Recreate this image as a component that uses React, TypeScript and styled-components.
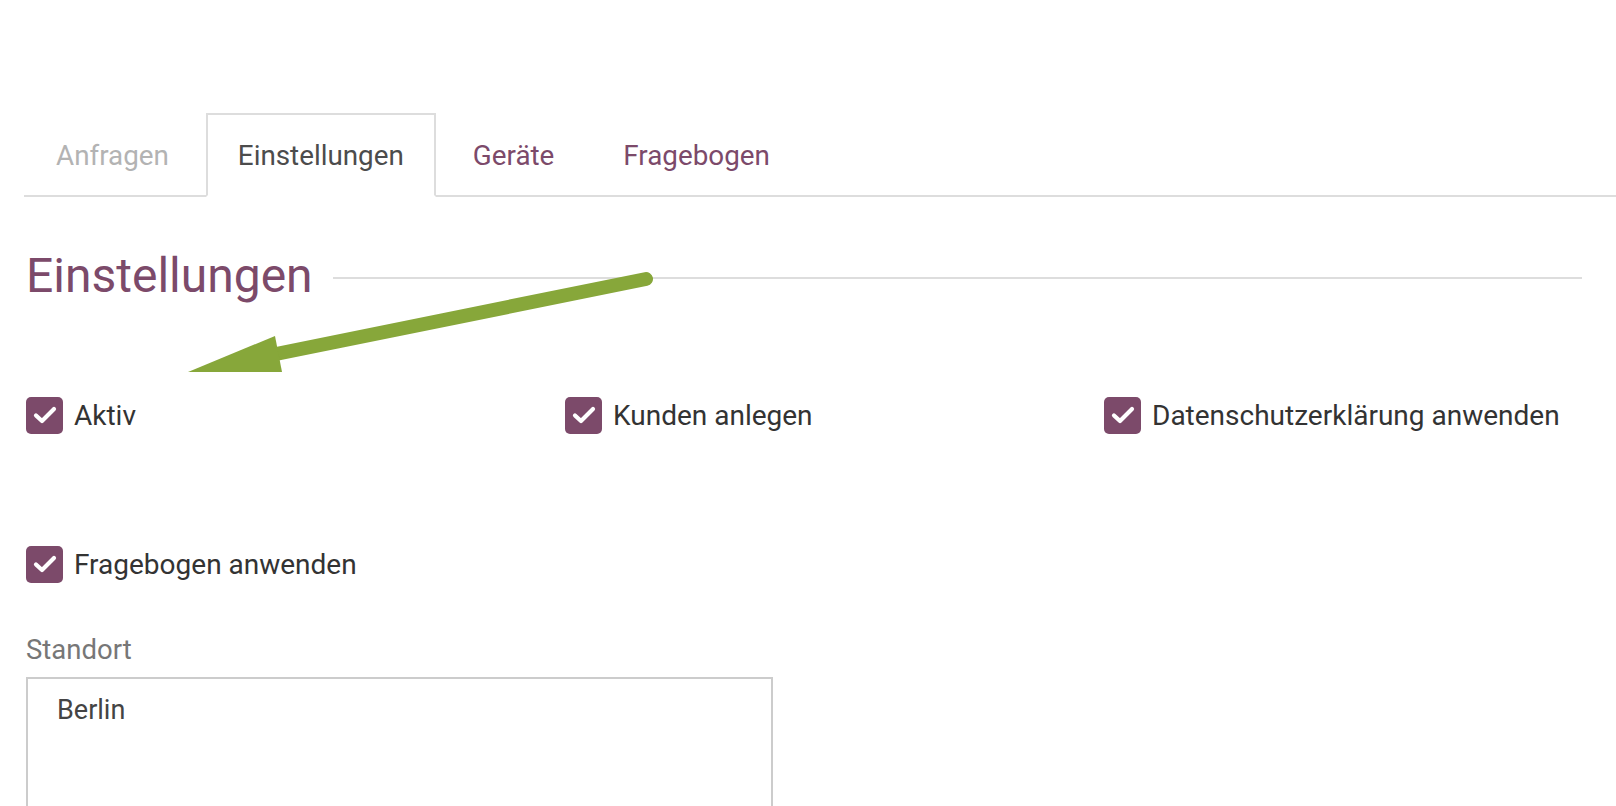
import React from 'react';
import styled, { createGlobalStyle } from 'styled-components';

const GlobalStyle = createGlobalStyle`
	html, body {
		margin: 0;
		padding: 0;
		background: #fff;
	}
	body {
		font-family: Roboto, 'Liberation Sans', sans-serif;
		color: #333;
	}
`;

const PageStyled = styled.div`
	position: relative;
	width: 1616px;
	height: 806px;
	overflow: hidden;
	padding-top: 113px;
	box-sizing: border-box;
`;

const TabBar = styled.div`
	display: flex;
	gap: 5px;
	margin-left: 24px;
	border-bottom: 2px solid #dddddd;
	height: 84px;
	box-sizing: border-box;
`;

const Tab = styled.div<{ $active?: boolean; $disabled?: boolean }>`
	display: flex;
	align-items: center;
	padding: 0 30px;
	margin-bottom: -2px;
	font-size: 27.8px;
	color: ${(props) => (props.$disabled ? '#b3b3b3' : props.$active ? '#4c4c4c' : '#7c4a6a')};
	border: 2px solid ${(props) => (props.$active ? '#dddddd' : 'transparent')};
	border-bottom: 2px solid ${(props) => (props.$active ? '#fff' : 'transparent')};
	background: ${(props) => (props.$active ? '#fff' : 'transparent')};
	cursor: pointer;
`;

const Content = styled.div`
	padding: 0 34px 0 26px;
`;

const SectionTitle = styled.div`
	display: flex;
	align-items: center;
	gap: 20px;
	margin-top: 50px;
	h2 {
		margin: 0;
		font-weight: 400;
		font-size: 48px;
		line-height: 58px;
		color: #7c4a6a;
		white-space: nowrap;
	}
	.line {
		flex: 1;
		height: 2px;
		background: #dddddd;
		margin-top: 4px;
	}
`;

const CheckGrid = styled.div`
	display: grid;
	grid-template-columns: repeat(3, 539px);
	row-gap: 113px;
	margin-top: 92px;
`;

const CheckItem = styled.label`
	display: flex;
	align-items: center;
	gap: 11px;
	height: 36px;
	font-size: 28px;
	color: #333;
	.box {
		width: 37px;
		height: 37px;
		border-radius: 5px;
		background: #7c4a6a;
		display: flex;
		align-items: center;
		justify-content: center;
		flex-shrink: 0;
	}
`;

const FieldLabel = styled.div`
	margin-top: 51px;
	font-size: 27.5px;
	color: #777;
`;

const TextArea = styled.div`
	margin-top: 11px;
	width: 747px;
	height: 200px;
	box-sizing: border-box;
	border: 2px solid #cccccc;
	padding: 15px 29px;
	font-size: 27px;
	color: #444;
`;

const Annotation = styled.svg`
	position: absolute;
	left: 0;
	top: 0;
	pointer-events: none;
`;

const CheckIcon = () => (
	<svg width='24' height='20' viewBox='0 0 24 20'>
		<path d='M3 10.5 L9 16 L21 4' fill='none' stroke='#fff' strokeWidth='4.2' strokeLinecap='round' strokeLinejoin='round' />
	</svg>
);

const checks = ['Aktiv', 'Kunden anlegen', 'Datenschutzerklärung anwenden', 'Fragebogen anwenden'];

const App = () => {
	return (
		<>
			<GlobalStyle />
			<PageStyled>
				<TabBar>
					<Tab $disabled>Anfragen</Tab>
					<Tab $active>Einstellungen</Tab>
					<Tab>Geräte</Tab>
					<Tab>Fragebogen</Tab>
				</TabBar>
				<Content>
					<SectionTitle>
						<h2>Einstellungen</h2>
						<div className='line' />
					</SectionTitle>
					<CheckGrid>
						{checks.map((item) => (
							<CheckItem key={item}>
								<span className='box'>
									<CheckIcon />
								</span>
								{item}
							</CheckItem>
						))}
					</CheckGrid>
					<FieldLabel>Standort</FieldLabel>
					<TextArea>Berlin</TextArea>
				</Content>
				<Annotation width='1616' height='806'>
					<line x1='646' y1='279' x2='276' y2='354' stroke='#87a73a' strokeWidth='14' strokeLinecap='round' />
					<polygon points='188,372 275,336 282,372' fill='#87a73a' />
				</Annotation>
			</PageStyled>
		</>
	);
};

export default App;
